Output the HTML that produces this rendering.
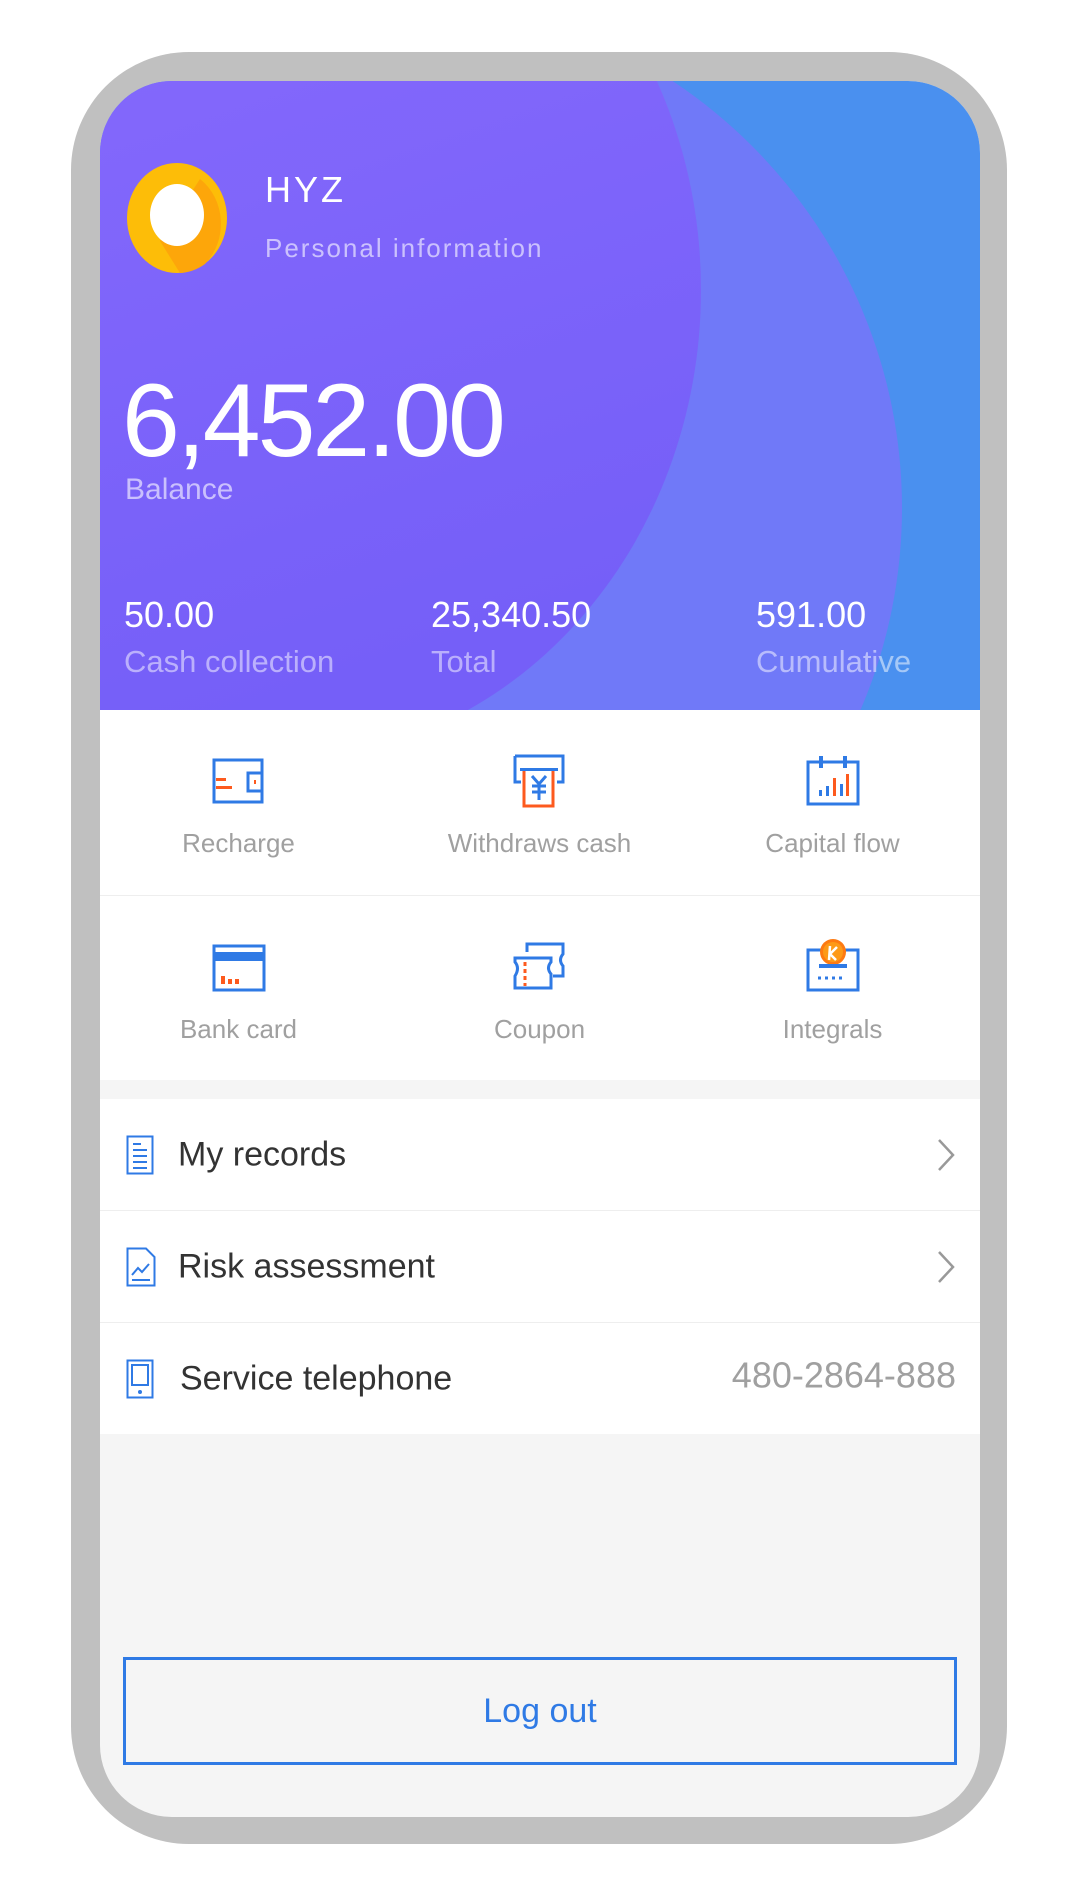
<!DOCTYPE html>
<html><head><meta charset="utf-8"><style>
*{margin:0;padding:0;box-sizing:border-box}
body{width:1080px;height:1897px;background:#fff;position:relative;font-family:"Liberation Sans",sans-serif;overflow:hidden}
.phone{position:absolute;left:71px;top:52px;width:936px;height:1792px;background:#c0c0c0;border-radius:118px}
.screen{position:absolute;left:100px;top:81px;width:880px;height:1736px;background:#f5f5f5;border-radius:72px;overflow:hidden}
.hdr{position:absolute;left:0;top:0;width:880px;height:629px;overflow:hidden}
.t{position:absolute;white-space:nowrap}
.grid{position:absolute;left:0;top:629px;width:880px;height:370px;background:#fff}
.cell{position:absolute;width:293px;text-align:center}
.cell svg{display:block;margin:0 auto}
.lab{position:absolute;width:293px;text-align:center;color:#a0a0a0;font-size:26px;line-height:30px}
.sep{position:absolute;left:0;width:880px;height:1px;background:#eee}
.list{position:absolute;left:0;top:1018px;width:880px;height:335px;background:#fff}
.row{position:absolute;left:0;width:880px;height:111px}
.row .lb{position:absolute;left:78px;top:50%;transform:translateY(-50%);font-size:34px;color:#333}
.row svg.ic{position:absolute;left:26px;top:50%;transform:translateY(-50%)}
.chev{position:absolute;right:24px;top:50%;transform:translateY(-50%)}
.btn{position:absolute;left:23px;top:1576px;width:834px;height:108px;border:3px solid #2f7ae5;text-align:center;line-height:102px;color:#2f7ae5;font-size:34px}
</style></head><body>
<div class="phone"></div>
<div class="screen">
 <div class="hdr">
  <svg width="880" height="629" style="position:absolute;left:0;top:0">
   <defs>
    <linearGradient id="g1" x1="0" y1="0" x2="0.3" y2="1"><stop offset="0" stop-color="#8a6cfd"/><stop offset="1" stop-color="#755ff8"/></linearGradient>
   </defs>
   <rect width="880" height="629" fill="#4a90ef"/>
   <circle cx="290" cy="427" r="512" fill="#7079f8"/>
   <ellipse cx="178" cy="209" rx="423" ry="470" fill="url(#g1)"/>
   <ellipse cx="77" cy="137" rx="50" ry="55" fill="#fdbd08"/>
   <path d="M100 98 A50 55 0 0 1 105 183 A50 55 0 0 1 80 192 L60 160 Z" fill="#fda60a"/>
   <ellipse cx="77" cy="134" rx="27" ry="31" fill="#fff"/>
  </svg>
  <div class="t" style="left:165px;top:88px;font-size:36px;color:#fff;letter-spacing:3px">HYZ</div>
  <div class="t" style="left:165px;top:152px;font-size:26px;color:rgba(255,255,255,.6);letter-spacing:2px">Personal information</div>
  <div class="t" style="left:22px;top:281px;font-size:104px;color:#fff;letter-spacing:-3px">6,452.00</div>
  <div class="t" style="left:25px;top:392px;font-size:30px;color:rgba(255,255,255,.6)">Balance</div>
  <div class="t" style="left:24px;top:513px;font-size:36px;color:#fff">50.00</div>
  <div class="t" style="left:331px;top:513px;font-size:36px;color:#fff">25,340.50</div>
  <div class="t" style="left:656px;top:513px;font-size:36px;color:#fff">591.00</div>
  <div class="t" style="left:24px;top:563px;font-size:31px;color:rgba(255,255,255,.5)">Cash collection</div>
  <div class="t" style="left:331px;top:563px;font-size:31px;color:rgba(255,255,255,.5)">Total</div>
  <div class="t" style="left:656px;top:563px;font-size:31px;color:rgba(255,255,255,.5)">Cumulative</div>
 </div>
 <div class="grid">
  <div class="cell" style="left:-8px;top:48px">
   <svg width="54" height="48" viewBox="0 0 54 48"><rect x="2" y="2" width="48" height="42" fill="none" stroke="#2f7ae5" stroke-width="3"/><rect x="36" y="15" width="14" height="18" fill="#fff" stroke="#2f7ae5" stroke-width="3"/><rect x="42" y="22" width="2" height="4" fill="#fd5a1e"/><rect x="4" y="20" width="10" height="3" fill="#fd5a1e"/><rect x="4" y="28" width="16" height="3" fill="#fd5a1e"/></svg></div>
  <div class="cell" style="left:293px;top:44px">
   <svg width="54" height="54" viewBox="0 0 54 54"><path d="M2 2H50V28H44M8 28H2V2" fill="none" stroke="#2f7ae5" stroke-width="3"/><rect x="7" y="14" width="38" height="3" fill="#2f7ae5"/><path d="M11 17V52H40V17" fill="none" stroke="#fd5a1e" stroke-width="3"/><path d="M19 22L26 30L33 22M26 30V46M19 32H33M19 38H33" fill="none" stroke="#2f7ae5" stroke-width="3"/></svg></div>
  <div class="cell" style="left:586px;top:44px">
   <svg width="54" height="54" viewBox="0 0 54 54"><rect x="2" y="8" width="50" height="42" fill="none" stroke="#2f7ae5" stroke-width="3"/><rect x="13" y="2" width="4" height="12" fill="#2f7ae5"/><rect x="37" y="2" width="4" height="12" fill="#2f7ae5"/><rect x="13" y="36" width="3" height="6" fill="#2f7ae5"/><rect x="20" y="32" width="3" height="10" fill="#2f7ae5"/><rect x="27" y="24" width="3" height="18" fill="#fd5a1e"/><rect x="34" y="30" width="3" height="12" fill="#2f7ae5"/><rect x="40" y="20" width="3" height="22" fill="#fd5a1e"/></svg></div>
  <div class="lab" style="left:-8px;top:118px">Recharge</div>
  <div class="lab" style="left:293px;top:118px">Withdraws cash</div>
  <div class="lab" style="left:586px;top:118px">Capital flow</div>
  <div class="sep" style="top:185px"></div>
  <div class="cell" style="left:-8px;top:234px">
   <svg width="54" height="48" viewBox="0 0 54 48"><rect x="2" y="2" width="50" height="44" fill="none" stroke="#2f7ae5" stroke-width="3"/><rect x="2" y="8" width="50" height="9" fill="#2f7ae5"/><rect x="9" y="32" width="4" height="8" fill="#fd5a1e"/><rect x="16" y="35" width="4" height="5" fill="#fd5a1e"/><rect x="23" y="35" width="4" height="5" fill="#fd5a1e"/></svg></div>
  <div class="cell" style="left:293px;top:232px">
   <svg width="54" height="50" viewBox="0 0 54 50"><path d="M14 10V2H50V12Q45 18 50 24V34H40" fill="none" stroke="#2f7ae5" stroke-width="3"/><path d="M2 16H38V20Q33 26 38 32V46H2V34Q7 26 2 20Z" fill="#fff" stroke="#2f7ae5" stroke-width="3"/><path d="M12 20V44" stroke="#fd5a1e" stroke-width="3" stroke-dasharray="4 3"/></svg></div>
  <div class="cell" style="left:586px;top:228px">
   <svg width="54" height="54" viewBox="0 0 54 54"><rect x="2" y="12" width="50" height="40" fill="none" stroke="#2f7ae5" stroke-width="3"/><circle cx="27" cy="14" r="13" fill="#fd7a12"/><circle cx="27" cy="14" r="10" fill="#fd9a18"/><path d="M24 8L23 22M31 9L24 16L30 22" stroke="#fff" stroke-width="2.5" fill="none"/><rect x="13" y="26" width="28" height="4" fill="#2f7ae5"/><path d="M12 40H40" stroke="#2f7ae5" stroke-width="3" stroke-dasharray="3 4"/></svg></div>
  <div class="lab" style="left:-8px;top:304px">Bank card</div>
  <div class="lab" style="left:293px;top:304px">Coupon</div>
  <div class="lab" style="left:586px;top:304px">Integrals</div>
 </div>
 <div class="list">
  <div class="row" style="top:0">
   <svg class="ic" width="28" height="40" viewBox="0 0 28 40"><rect x="1.5" y="1.5" width="25" height="37" fill="none" stroke="#2f7ae5" stroke-width="2"/><path d="M7 9H15M7 15H21M7 21H21M7 27H21M7 33H21" stroke="#2f7ae5" stroke-width="2"/></svg>
   <div class="lb">My records</div>
   <svg class="chev" width="20" height="36" viewBox="0 0 20 36"><path d="M3 3L17 18L3 33" fill="none" stroke="#999" stroke-width="2.5"/></svg></div>
  <div class="sep" style="top:111px"></div>
  <div class="row" style="top:112px">
   <svg class="ic" width="30" height="40" viewBox="0 0 30 40"><path d="M1.5 1.5H20L28.5 10V38.5H1.5Z" fill="none" stroke="#2f7ae5" stroke-width="2"/><path d="M6 28L12 21L16 25L23 17M6 33H24" fill="none" stroke="#2f7ae5" stroke-width="2"/></svg>
   <div class="lb">Risk assessment</div>
   <svg class="chev" width="20" height="36" viewBox="0 0 20 36"><path d="M3 3L17 18L3 33" fill="none" stroke="#999" stroke-width="2.5"/></svg></div>
  <div class="sep" style="top:223px"></div>
  <div class="row" style="top:224px">
   <svg class="ic" width="28" height="40" viewBox="0 0 28 40"><rect x="1.5" y="1.5" width="25" height="37" fill="none" stroke="#2f7ae5" stroke-width="2"/><rect x="6" y="6" width="16" height="20" fill="none" stroke="#2f7ae5" stroke-width="2"/><circle cx="14" cy="33" r="2" fill="#2f7ae5"/></svg>
   <div class="lb" style="left:80px">Service telephone</div>
   <div style="position:absolute;right:24px;top:50%;transform:translateY(-58%);font-size:36px;color:#a0a0a0">480-2864-888</div></div>
 </div>
 <div class="btn">Log out</div>
</div>
</body></html>
